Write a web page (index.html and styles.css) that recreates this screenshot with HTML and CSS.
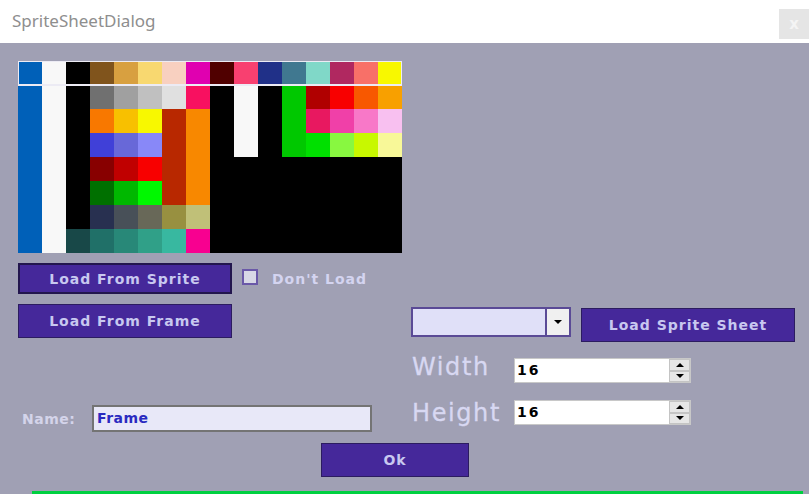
FILE: index.html
```html
<!DOCTYPE html>
<html lang="en">
<head>
    <meta charset="UTF-8">
    <title>SpriteSheetDialog</title>
    <link rel="stylesheet" href="styles.css">
</head>
<body>
    <header class="titlebar">
        <span class="title">SpriteSheetDialog</span>
        <button class="close">x</button>
    </header>

    <main class="dialog">
        <div class="palette" id="palette">
            <div class="selection"></div>
        </div>

        <div class="sprite-row">
            <button class="btn btn-default">Load From Sprite</button>
            <label class="check"><span class="checkbox"></span>Don't Load</label>
        </div>

        <div class="lower">
            <div class="left-col">
                <button class="btn btn-frame">Load From Frame</button>
                <div class="name-row">
                    <label class="name-label">Name:</label>
                    <div class="text-input">Frame</div>
                </div>
            </div>

            <div class="right-col">
                <div class="sheet-row">
                    <div class="combo">
                        <span class="combo-value"></span>
                        <span class="combo-arrow"><span class="tri-down"></span></span>
                    </div>
                    <button class="btn btn-sheet">Load Sprite Sheet</button>
                </div>

                <div class="size-row size-row-width">
                    <span class="size-label">Width</span>
                    <div class="spinner">
                        <span class="spinner-value">16</span>
                        <span class="spin-buttons">
                            <span class="spin"><span class="tri-up"></span></span>
                            <span class="spin"><span class="tri-down"></span></span>
                        </span>
                    </div>
                </div>

                <div class="size-row size-row-height">
                    <span class="size-label">Height</span>
                    <div class="spinner">
                        <span class="spinner-value">16</span>
                        <span class="spin-buttons">
                            <span class="spin"><span class="tri-up"></span></span>
                            <span class="spin"><span class="tri-down"></span></span>
                        </span>
                    </div>
                </div>
            </div>
        </div>

        <button class="btn btn-ok">Ok</button>

        <div class="progress"></div>
    </main>

    <script>
        // Colores de la paleta, fila por fila (16 columnas)
        const rows = [
            '0060b8 f8f8f8 000000 80541c d8a040 f8d870 f8d0c0 e000b0 500000 f84070 203088 407890 80d8c8 b02860 f87068 f8f800',
            '0060b8 f8f8f8 000000 707070 a0a0a0 c0c0c0 e0e0e0 f81060 000000 f8f8f8 000000 00c800 b00000 f80000 f85800 f8a000',
            '0060b8 f8f8f8 000000 f87800 f8c000 f8f800 b82800 f88800 000000 f8f8f8 000000 00c800 e81860 f040a8 f878c8 f8c0f0',
            '0060b8 f8f8f8 000000 4040d8 6868d8 8888f8 b82800 f88800 000000 f8f8f8 000000 00c800 00e000 88f840 c8f800 f8f898',
            '0060b8 f8f8f8 000000 880000 c00000 f80000 b82800 f88800 000000 000000 000000 000000 000000 000000 000000 000000',
            '0060b8 f8f8f8 000000 007000 00b800 00f800 b82800 f88800 000000 000000 000000 000000 000000 000000 000000 000000',
            '0060b8 f8f8f8 000000 283050 485058 686858 989040 c0c078 000000 000000 000000 000000 000000 000000 000000 000000',
            '0060b8 f8f8f8 184848 207068 288878 30a088 38b8a0 f80090 000000 000000 000000 000000 000000 000000 000000 000000'
        ];

        const palette = document.getElementById('palette');
        rows.forEach(row => {
            row.split(' ').forEach(color => {
                const cell = document.createElement('div');
                cell.className = 'cell';
                cell.style.background = '#' + color;
                palette.appendChild(cell);
            });
        });
    </script>
</body>
</html>
```

FILE: styles.css
```css
body {
    margin: 0;
    width: 809px;
    height: 494px;
    overflow: hidden;
    font-family: "DejaVu Sans", Verdana, sans-serif;
    background: #a0a0b4;
}

.titlebar {
    height: 43px;
    background: white;
    display: flex;
    align-items: flex-start;
    justify-content: space-between;
}
.title {
    margin: 9px 0 0 12px;
    font-family: "Noto Sans", sans-serif;
    font-size: 17px;
    color: #8e8e8e;
}
.close {
    margin-top: 9px;
    width: 30px;
    height: 30px;
    border: none;
    padding: 0;
    background: #e5e5e5;
    color: #f4f4f4;
    font-family: "DejaVu Sans", sans-serif;
    font-size: 15px;
    font-weight: bold;
}

.dialog {
    height: 451px;
    box-sizing: border-box;
    padding: 18px 0 0 18px;
    display: flex;
    flex-direction: column;
    align-items: flex-start;
}

/* paleta */
.palette {
    position: relative;
    display: grid;
    grid-template-columns: repeat(16, 24px);
    grid-auto-rows: 24px;
    width: 384px;
}
.selection {
    position: absolute;
    left: 0;
    top: 0;
    width: 384px;
    height: 25px;
    box-sizing: border-box;
    border: 1px solid #ecebf4;
    border-bottom-width: 2px;
}

/* botones */
.btn {
    font-family: "DejaVu Sans", Verdana, sans-serif;
    font-weight: bold;
    font-size: 14px;
    letter-spacing: 1px;
    color: #c8c8f0;
    background: #45289a;
    border: 1px solid #2c1c60;
    padding: 0;
    cursor: pointer;
}
.btn-default {
    width: 214px;
    height: 31px;
    border: 2px solid #23164e;
}
.btn-frame {
    width: 214px;
    height: 34px;
}
.btn-sheet {
    width: 214px;
    height: 34px;
    margin-top: 1px;
}
.btn-ok {
    width: 148px;
    height: 34px;
    margin: 11px 0 0 303px;
}

.sprite-row {
    display: flex;
    align-items: center;
    margin-top: 10px;
}
.check {
    display: flex;
    align-items: center;
    margin-left: 10px;
    font-weight: bold;
    font-size: 14px;
    letter-spacing: 1px;
    color: #d4d4f0;
}
.checkbox {
    width: 12px;
    height: 12px;
    margin: -4px 14px 0 0;
    background: #d8d8e6;
    border: 2px solid #6a58a8;
}

.lower {
    display: flex;
    margin-top: 10px;
}
.left-col {
    width: 354px;
    display: flex;
    flex-direction: column;
    align-items: flex-start;
}
.name-row {
    display: flex;
    align-items: center;
    margin-top: 67px;
}
.name-label {
    width: 70px;
    padding-left: 4px;
    font-weight: bold;
    font-size: 14px;
    letter-spacing: 0.5px;
    color: #d4d4ea;
}
.text-input {
    width: 280px;
    height: 27px;
    box-sizing: border-box;
    border: 2px solid #747474;
    background: #e8e8f8;
    padding-left: 3px;
    line-height: 23px;
    font-weight: bold;
    font-size: 14px;
    letter-spacing: 0.5px;
    color: #2a2ac0;
}

.right-col {
    margin-left: 39px;
    display: flex;
    flex-direction: column;
}
.sheet-row {
    display: flex;
    align-items: flex-start;
    gap: 10px;
    padding-top: 3px;
}
.combo {
    width: 160px;
    height: 30px;
    box-sizing: border-box;
    border: 2px solid #5a4a96;
    background: #e0e0f8;
    display: flex;
}
.combo-value {
    flex: 1;
}
.combo-arrow {
    width: 22px;
    border-left: 2px solid #5a4a96;
    background: #f0f0f0;
    display: flex;
    align-items: center;
    justify-content: center;
}

.tri-down,
.tri-up {
    width: 0;
    height: 0;
    border-left: 4px solid transparent;
    border-right: 4px solid transparent;
}
.tri-down {
    border-top: 4px solid black;
}
.tri-up {
    border-bottom: 4px solid black;
}

.size-row {
    display: flex;
    align-items: center;
    height: 25px;
}
.size-row-width {
    margin-top: 16px;
}
.size-row-height {
    margin-top: 17px;
}
.size-label {
    width: 103px;
    padding-left: 1px;
    box-sizing: border-box;
    font-size: 24px;
    letter-spacing: 1.6px;
    line-height: 30px;
    color: #d8d8f2;
    -webkit-text-stroke: 0.3px #d8d8f2;
}
.size-row-width .size-label {
    margin-top: -8px;
}
.spinner {
    width: 177px;
    height: 25px;
    box-sizing: border-box;
    border: 1px solid #c8c8c8;
    background: white;
    display: flex;
}
.spinner-value {
    flex: 1;
    padding-left: 2px;
    line-height: 23px;
    font-weight: bold;
    font-size: 14px;
    letter-spacing: 2px;
    color: black;
}
.spin-buttons {
    width: 21px;
    display: flex;
    flex-direction: column;
}
.spin {
    flex: 1;
    background: #e6e6e6;
    border: 1px solid #c4c4c4;
    display: flex;
    align-items: center;
    justify-content: center;
}

.progress {
    margin: auto 6px 0 14px;
    align-self: stretch;
    height: 3px;
    background: #00d040;
}
```
